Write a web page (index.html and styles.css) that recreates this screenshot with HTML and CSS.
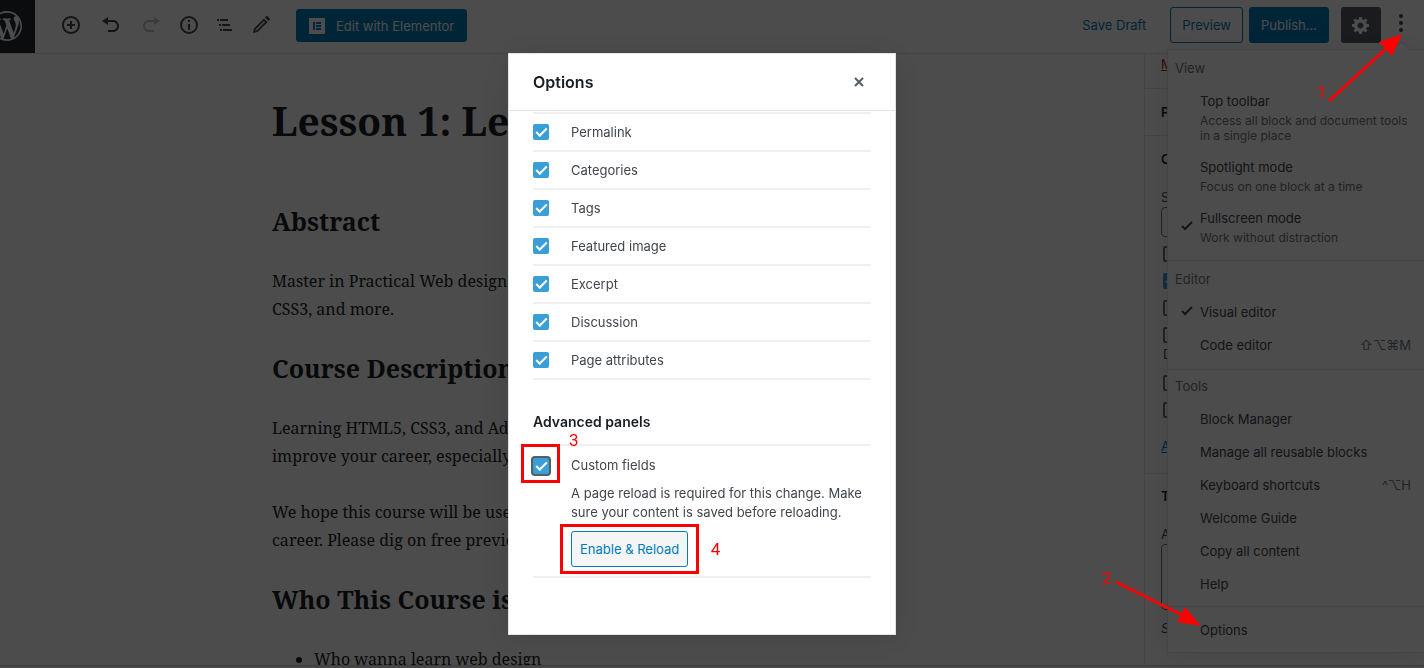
FILE: index.html
```html
<!DOCTYPE html>
<html lang="en">
<head>
  <meta charset="UTF-8">
  <meta name="viewport" content="width=device-width, initial-scale=1.0">
  <title>Edit Lesson</title>
  <link rel="stylesheet" href="styles.css">
</head>
<body>
  <div class="editor">
    <header class="toolbar">
      <a class="wp-logo" href="#" aria-label="View all posts">
        <svg width="30" height="30" viewBox="0 0 20 20"><path d="M20 10c0-5.51-4.49-10-10-10C4.48 0 0 4.49 0 10c0 5.52 4.48 10 10 10 5.51 0 10-4.48 10-10zM7.78 15.37L4.37 6.22c.55-.02 1.17-.08 1.17-.08.5-.06.44-1.13-.06-1.11 0 0-1.45.11-2.37.11-.18 0-.37 0-.58-.01C4.12 2.69 6.87 1.11 10 1.11c2.33 0 4.45.87 6.05 2.34-.68-.11-1.65.39-1.65 1.58 0 .74.45 1.36.9 2.1.35.61.55 1.36.55 2.46 0 1.49-1.4 5-1.4 5l-3.03-8.37c.54-.02.82-.17.82-.17.5-.05.44-1.25-.06-1.22 0 0-1.44.12-2.38.12-.87 0-2.33-.12-2.33-.12-.5-.03-.56 1.2-.06 1.22l.92.08 1.26 3.41zM17.41 10c.24-.64.74-1.87.43-4.25.7 1.29 1.05 2.71 1.05 4.25 0 3.29-1.73 6.24-4.4 7.78.97-2.59 1.94-5.2 2.92-7.78zM6.1 18.09C3.12 16.65 1.11 13.53 1.11 10c0-1.3.23-2.48.72-3.59C3.25 10.3 4.67 14.2 6.1 18.09zm4.03-6.63l2.58 6.98c-.86.29-1.76.45-2.71.45-.79 0-1.57-.11-2.29-.33.81-2.38 1.62-4.74 2.42-7.1z"/></svg>
      </a>
      <div class="tools">
        <button aria-label="Add block"><svg width="20" height="20" viewBox="0 0 20 20"><path d="M10 1c-5 0-9 4-9 9s4 9 9 9 9-4 9-9-4-9-9-9zm0 16c-3.900 0-7-3.100-7-7s3.100-7 7-7 7 3.100 7 7-3.100 7-7 7zm1-11H9v3H6v2h3v3h2v-3h3V9h-3V6z"/></svg></button>
        <button aria-label="Undo"><svg width="20" height="20" viewBox="0 0 20 20"><path d="M12 5H7V2L1 6l6 4V7h5c2.200 0 4 1.800 4 4s-1.800 4-4 4H7v2h5c3.300 0 6-2.700 6-6s-2.700-6-6-6z"/></svg></button>
        <button class="is-disabled" aria-label="Redo"><svg width="20" height="20" viewBox="0 0 20 20"><path d="M8 5h5V2l6 4-6 4V7H8c-2.200 0-4 1.800-4 4s1.800 4 4 4h5v2H8c-3.300 0-6-2.700-6-6s2.700-6 6-6z"/></svg></button>
      </div>
      <div class="tools tools-document">
        <button aria-label="Content structure"><svg width="20" height="20" viewBox="0 0 20 20"><path d="M10 1a9 9 0 1 0 0 18 9 9 0 0 0 0-18zm0 16a7 7 0 1 1 0-14 7 7 0 0 1 0 14zM9 5h2v2H9zM9 9h2v6H9z"/></svg></button>
        <button aria-label="Block navigation"><svg width="20" height="20" viewBox="0 0 20 20"><path d="M2 4h2v2H2zM5 4h8v2H5zM4 9h2v2H4zM7 9h8v2H7zM5 14h2v2H5zM8 14h9v2H8z"/></svg></button>
        <button aria-label="Edit"><svg width="20" height="20" viewBox="0 0 20 20"><path fill-rule="evenodd" d="M2 18l1-4.500L13 3.500l3.500 3.500L6.500 17zM4.200 15.800l1.600-.5 8.200-8.300-1-1L4.800 14.200zM14 2.500l1.200-1.200c.4-.4 1-.4 1.400 0l2.100 2.100c.4.4.4 1 0 1.400L17.500 6z"/></svg></button>
      </div>
      <button class="btn btn-primary btn-elementor">
        <svg width="16" height="16" viewBox="0 0 16 16"><path fill-rule="evenodd" d="M0 0h16v16H0zM4 4v8h2V4zM7 4v2h5V4zM7 7v2h5V7zM7 10v2h5v-2z"/></svg>
        Edit with Elementor
      </button>
      <div class="settings">
        <button class="btn-link">Save Draft</button>
        <button class="btn btn-outline">Preview</button>
        <button class="btn btn-primary">Publish...</button>
        <button class="btn-gear" aria-label="Settings"><svg width="20" height="20" viewBox="0 0 20 20"><path d="M18 12h-2.180c-.17.700-.44 1.350-.81 1.930l1.540 1.540-2.100 2.100-1.540-1.540c-.58.360-1.230.630-1.910.790V19H8v-2.180c-.68-.16-1.330-.43-1.910-.79l-1.540 1.540-2.120-2.120 1.540-1.540c-.36-.58-.63-1.230-.79-1.910H1V9.030h2.170c.16-.7.440-1.350.8-1.940L2.430 5.550l2.100-2.100 1.540 1.540c.58-.37 1.240-.64 1.930-.81V2h3v2.180c.68.160 1.330.430 1.910.790l1.540-1.540 2.120 2.120-1.540 1.540c.36.590.640 1.240.800 1.940H18V12zm-8.500 1.500c1.660 0 3-1.340 3-3s-1.340-3-3-3-3 1.340-3 3 1.340 3 3 3z"/></svg></button>
        <div class="more">
          <button class="btn-more" aria-label="More tools"><svg width="20" height="20" viewBox="0 0 20 20"><circle cx="10" cy="3" r="2"/><circle cx="10" cy="10" r="2"/><circle cx="10" cy="17" r="2"/></svg></button>
          <div class="menu">
            <section class="menu-group">
              <h2>View</h2>
              <button class="menu-item"><span>Top toolbar</span><small>Access all block and document tools in a single place</small></button>
              <button class="menu-item"><span>Spotlight mode</span><small>Focus on one block at a time</small></button>
              <button class="menu-item is-checked"><svg class="tick" width="12" height="10" viewBox="0 0 12 10"><path d="M1 5l3 3 7-7"/></svg><span>Fullscreen mode</span><small>Work without distraction</small></button>
            </section>
            <section class="menu-group">
              <h2>Editor</h2>
              <button class="menu-item is-checked"><svg class="tick" width="12" height="10" viewBox="0 0 12 10"><path d="M1 5l3 3 7-7"/></svg><span>Visual editor</span></button>
              <button class="menu-item"><span>Code editor</span><kbd>⇧⌥⌘M</kbd></button>
            </section>
            <section class="menu-group is-compact">
              <h2>Tools</h2>
              <button class="menu-item"><span>Block Manager</span></button>
              <button class="menu-item"><span>Manage all reusable blocks</span></button>
              <button class="menu-item"><span>Keyboard shortcuts</span><kbd>^⌥H</kbd></button>
              <button class="menu-item"><span>Welcome Guide</span></button>
              <button class="menu-item"><span>Copy all content</span></button>
              <button class="menu-item"><span>Help</span></button>
            </section>
            <section class="menu-group is-compact">
              <button class="menu-item"><span>Options</span></button>
            </section>
          </div>
        </div>
      </div>
    </header>

    <div class="layout">
      <main class="content">
        <article class="post">
          <h1>Lesson 1: Learn</h1>
          <h2>Abstract</h2>
          <p>Master in Practical Web design with HTML5,<br>CSS3, and more.</p>
          <h2>Course Description</h2>
          <p>Learning HTML5, CSS3, and Advanced design will<br>improve your career, especially online.</p>
          <p>We hope this course will be useful for your<br>career. Please dig on free preview lessons.</p>
          <h2>Who This Course is For</h2>
          <ul>
            <li>Who wanna learn web design</li>
          </ul>
        </article>
      </main>
      <aside class="sidebar">
        <div class="panel panel-status"><a class="trash" href="#">Move to trash</a></div>
        <div class="panel panel-closed"><h3>Permalink</h3></div>
        <div class="panel panel-categories">
          <h3>Categories</h3>
          <label for="cat-search">Search Categories</label>
          <input id="cat-search" class="field" type="text">
          <div class="checks">
            <label><input type="checkbox"> Courses</label>
            <label><input type="checkbox" checked> Lessons</label>
            <label><input type="checkbox"> News</label>
            <label class="two-lines"><input type="checkbox"> Web<br>Design</label>
            <label><input type="checkbox"> Tips</label>
            <label><input type="checkbox"> Other</label>
          </div>
          <a href="#">Add New Category</a>
        </div>
        <div class="panel panel-tags">
          <h3>Tags</h3>
          <label for="tag-new">Add New Tag</label>
          <textarea id="tag-new" class="field"></textarea>
          <p>Separate with commas</p>
        </div>
      </aside>
    </div>
    <footer class="footer"></footer>
  </div>

  <div class="overlay">
    <div class="modal" role="dialog" aria-labelledby="modal-title">
      <div class="modal-header">
        <h1 id="modal-title">Options</h1>
        <button aria-label="Close"><svg width="10" height="10" viewBox="0 0 10 10"><path d="M1 1l8 8M9 1L1 9"/></svg></button>
      </div>
      <div class="modal-body">
        <ul class="options">
          <li><input type="checkbox" id="o1" checked><label for="o1">Permalink</label></li>
          <li><input type="checkbox" id="o2" checked><label for="o2">Categories</label></li>
          <li><input type="checkbox" id="o3" checked><label for="o3">Tags</label></li>
          <li><input type="checkbox" id="o4" checked><label for="o4">Featured image</label></li>
          <li><input type="checkbox" id="o5" checked><label for="o5">Excerpt</label></li>
          <li><input type="checkbox" id="o6" checked><label for="o6">Discussion</label></li>
          <li><input type="checkbox" id="o7" checked><label for="o7">Page attributes</label></li>
        </ul>
        <h2>Advanced panels</h2>
        <ul class="options options-advanced">
          <li>
            <span class="mark mark-check"><input class="is-focused" type="checkbox" id="o8" checked><b class="num">3</b></span>
            <label for="o8">Custom fields</label>
            <div class="notice">
              <p>A page reload is required for this change. Make sure your content is saved before reloading.</p>
              <span class="mark mark-button"><button class="btn btn-outline">Enable &amp; Reload</button><b class="num">4</b></span>
            </div>
          </li>
        </ul>
      </div>
    </div>
  </div>

  <!-- step arrows -->
  <div class="steps">
    <svg width="344" height="668" viewBox="0 0 344 668">
      <path class="line" d="M249 101L309 46M36 582L104 616"/>
      <path class="head" d="M322 34L312 56L299 42zM121 626L97 622L105 607z"/>
    </svg>
    <b class="num num-1">1</b>
    <b class="num num-2">2</b>
  </div>
</body>
</html>
```

FILE: styles.css
```css
:root {
  --dark: #191e23;
  --text: #40464d;
  --muted: #6c7781;
  --blue: #007cba;
  --line: #e2e4e7;
  --red: #ff0000;
}

* {
  box-sizing: border-box;
}

body {
  margin: 0;
  color: var(--dark);
  font-family: Inter, "Liberation Sans", sans-serif;
  font-size: 13px;
  line-height: 20px;
}

h1, h2, h3, p, ul {
  margin: 0;
  padding: 0;
}

button {
  padding: 0;
  border: 0;
  background: none;
  color: inherit;
  font: inherit;
}

svg {
  display: block;
  fill: currentColor;
}

.editor {
  display: flex;
  flex-direction: column;
  height: 100vh;
  overflow: hidden;
  background: #fff;
  isolation: isolate;
}

/* top toolbar */
.toolbar {
  display: flex;
  flex: none;
  height: 54px;
  border-bottom: 1px solid var(--line);
  color: #40464d;
}

.wp-logo {
  display: flex;
  align-items: center;
  justify-content: flex-end;
  width: 35px;
  height: 53px;
  margin-right: 26px;
  padding: 0 13px 2px 0;
  overflow: hidden;
  background: #23282d;
  color: #fff;
}

.wp-logo svg {
  flex: none;
}

.tools {
  display: flex;
  align-items: center;
  gap: 20px;
  height: 50px;
}

.tools-document {
  gap: 16px;
  margin: 0 25px 0 18px;
}

.tools .is-disabled {
  opacity: 0.3;
}

.btn {
  height: 36px;
  padding: 0 11px;
  border: 1px solid var(--blue);
  border-radius: 3px;
}

.btn-primary {
  background: var(--blue);
  color: #fff;
}

.btn-outline {
  color: var(--blue);
}

.btn-elementor {
  display: flex;
  align-items: center;
  gap: 11px;
  height: 33px;
  margin-top: 9px;
  padding: 0 12px;
}

.settings {
  display: flex;
  align-items: center;
  gap: 6px;
  height: 50px;
  margin-left: auto;
  padding-right: 13px;
}

.btn-link {
  margin-right: 18px;
  color: var(--blue);
}

.btn-gear {
  display: flex;
  align-items: center;
  justify-content: center;
  width: 40px;
  height: 36px;
  margin: 0 4px 0 6px;
  border-radius: 3px;
  background: #555d66;
  color: #fff;
}

.more {
  position: relative;
}

/* more menu */
.menu {
  position: absolute;
  top: 36px;
  right: -13px;
  z-index: 1;
  width: 257px;
  border: 1px solid var(--line);
  border-right: 0;
  background: #fff;
  box-shadow: 0 3px 30px rgba(25, 30, 35, 0.1);
}

.menu::before {
  content: "";
  position: absolute;
  top: -7px;
  right: 17px;
  width: 10px;
  height: 10px;
  border: 1px solid var(--line);
  border-width: 1px 0 0 1px;
  background: #fff;
  transform: rotate(45deg);
}

.menu-group {
  padding: 8px 0;
}

.menu-group + .menu-group {
  border-top: 1px solid var(--line);
}

.menu-group h2 {
  margin-bottom: 8px;
  padding: 2px 7px 0;
  color: var(--muted);
  font-size: 13px;
  font-weight: 400;
  line-height: 16px;
}

.menu-group.is-compact {
  padding: 6px 0;
}

.menu-item {
  display: grid;
  grid-template-columns: 1fr auto;
  position: relative;
  width: 100%;
  padding: 7px 13px 6px 32px;
  text-align: left;
}

.menu-item small {
  grid-column: 1 / 3;
  padding: 2px 0 1px;
  color: var(--muted);
  font-size: 12px;
  line-height: 15px;
}

.menu-item kbd {
  color: var(--muted);
  font-family: Inter, "DejaVu Sans", sans-serif;
}

.tick {
  position: absolute;
  top: calc(50% - 5px);
  left: 13px;
  fill: none;
  stroke: currentColor;
  stroke-width: 2;
}

/* post */
.layout {
  display: flex;
  flex: 1;
  min-height: 0;
}

.content {
  flex: 1;
  overflow: hidden;
}

.post {
  max-width: 600px;
  margin: 0 auto;
  font-family: "Noto Serif", "Droid Serif", "DejaVu Serif", serif;
  font-size: 16px;
  line-height: 28px;
}

.post h1 {
  margin: 37px 0 53px;
  font-size: 39px;
  line-height: 60px;
}

.post h2 {
  margin-bottom: 28px;
  font-size: 25px;
  line-height: 35px;
}

.post p {
  margin-bottom: 28px;
}

.post ul {
  padding-left: 42px;
}

/* sidebar */
.sidebar {
  width: 280px;
  overflow: hidden;
  border-left: 1px solid var(--line);
  color: var(--text);
}

.panel {
  padding: 0 16px;
  border-bottom: 1px solid var(--line);
}

.panel h3 {
  color: var(--dark);
  font-size: 13px;
  font-weight: 600;
}

.panel a {
  color: var(--blue);
}

.panel .trash {
  color: #b52727;
}

.panel-status {
  padding-bottom: 14px;
}

.panel-closed {
  padding-top: 13px;
  padding-bottom: 13px;
}

.panel-categories {
  padding-top: 13px;
  padding-bottom: 17px;
}

.panel-categories h3,
.panel-tags h3 {
  margin-bottom: 18px;
}

.field {
  display: block;
  width: 100%;
  height: 30px;
  border: 1px solid var(--muted);
  border-radius: 4px;
  background: #fff;
}

.checks {
  margin: 6px 0 10px 2px;
}

.checks label {
  display: block;
  height: 27px;
}

.checks .two-lines {
  height: 48px;
}

.panel-tags {
  padding-top: 12px;
  border-bottom: 0;
}

.panel-tags .field {
  height: 66px;
  margin-bottom: 8px;
}

.panel-tags p {
  font-style: italic;
}

.footer {
  flex: none;
  height: 3px;
  border-top: 1px solid #d0d0d3;
  background: #edeff0;
}

/* checkboxes */
input[type="checkbox"] {
  display: inline-block;
  position: relative;
  width: 16px;
  height: 16px;
  margin: 0 8px 0 0;
  border: 2px solid var(--muted);
  border-radius: 2px;
  appearance: none;
  vertical-align: middle;
}

input[type="checkbox"]:checked {
  border: 0;
  background: #3a9fd6;
}

input[type="checkbox"]:checked::before {
  content: "";
  box-sizing: border-box;
  position: absolute;
  top: 4px;
  left: 3px;
  width: 11px;
  height: 6px;
  border: 2px solid #fff;
  border-width: 0 0 2px 2px;
  transform: rotate(-45deg);
}

input[type="checkbox"].is-focused {
  box-shadow: 0 0 0 2px #555d66;
}

/* options modal */
.overlay {
  display: flex;
  position: fixed;
  inset: 0;
  align-items: flex-start;
  justify-content: center;
  padding: 53px 20px 0 0;
  background: rgba(0, 0, 0, 0.7);
}

.modal {
  width: 388px;
  border: 1px solid var(--line);
  background: #fff;
  box-shadow: 0 3px 30px rgba(25, 30, 35, 0.2);
  color: var(--text);
}

.modal-header {
  display: flex;
  align-items: center;
  justify-content: space-between;
  height: 57px;
  padding: 0 31px 0 24px;
  border-bottom: 1px solid var(--line);
}

.modal-header h1 {
  color: var(--dark);
  font-size: 16px;
  font-weight: 600;
}

.modal-header svg {
  stroke: #555d66;
  stroke-width: 2;
}

.modal-body {
  padding: 1px 24px 56px;
}

.modal-body h2 {
  margin: 32px 0 12px;
  color: var(--dark);
  font-size: 14px;
  font-weight: 600;
}

.options {
  border-top: 2px solid #f0f0f1;
  list-style: none;
}

.options li {
  display: grid;
  grid-template-columns: 38px 1fr;
  align-items: center;
  padding: 8px 0;
  border-bottom: 2px solid #f0f0f1;
}

.options-advanced li {
  padding: 9px 0;
}

.notice {
  grid-column: 2;
  padding-top: 9px;
}

.notice p {
  margin-bottom: 9px;
  line-height: 19px;
}

.notice .btn {
  padding: 0 8px;
  background: #f3f5f6;
}

/* red marks */
.mark {
  position: relative;
  justify-self: start;
  display: inline-block;
}

.mark::after {
  content: "";
  position: absolute;
  border: 3px solid var(--red);
  pointer-events: none;
}

.mark-check {
  height: 20px;
}

.mark-check::after {
  inset: -11px -3px -8px -12px;
}

.mark-button::after {
  inset: -7px -11px;
}

.num {
  position: absolute;
  color: var(--red);
  font-family: Roboto, sans-serif;
  font-size: 17px;
  font-weight: 400;
  line-height: 20px;
}

.mark-check .num {
  top: -25px;
  left: 36px;
}

.mark-button .num {
  top: 8px;
  right: -32px;
}

.steps {
  position: fixed;
  top: 0;
  right: 0;
  pointer-events: none;
}

.steps .line {
  stroke: var(--red);
  stroke-width: 3;
}

.steps .head {
  fill: var(--red);
}

.num-1 {
  top: 82px;
  left: 237px;
}

.num-2 {
  top: 568px;
  left: 22px;
}
```
